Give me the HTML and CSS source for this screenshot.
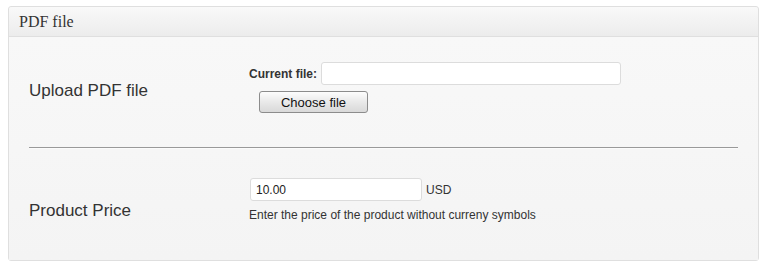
FILE: index.html
```html
<!DOCTYPE html>
<html>
<head>
  <title>PDF file</title>
  <link rel="stylesheet" href="styles.css">
</head>
<body>

  <div class="panel">
    <h3 class="panel-head">PDF file</h3>
    <div class="panel-body">

      <div class="row row-upload">
        <label class="row-label">Upload PDF file</label>
        <div class="row-field">
          <div class="current">
            <span class="current-label">Current file:</span>
            <input type="text" class="text-input file-input" value="">
          </div>
          <button class="choose-btn">Choose file</button>
        </div>
      </div>

      <hr class="divider">

      <div class="row row-price">
        <label class="row-label">Product Price</label>
        <div class="row-field">
          <div class="price">
            <input type="text" class="text-input price-input" value="10.00">
            <span class="unit">USD</span>
          </div>
          <p class="hint">Enter the price of the product without curreny symbols</p>
        </div>
      </div>

    </div>
  </div>

</body>
</html>
```

FILE: styles.css
```css
body { margin: 0; background: #fff; font-family: "Liberation Sans", Arial, sans-serif; color: #333; }

.panel {
  margin: 6px 0 0 8px;
  width: 749px;
  border: 1px solid #dfdfdf;
  border-radius: 3px;
  background: #f5f5f5;
}
.panel-head {
  margin: 0;
  height: 29px;
  line-height: 30px;
  padding-left: 10px;
  font-family: "Liberation Serif", Georgia, serif;
  font-weight: normal;
  font-size: 16px;
  color: #333;
  background: linear-gradient(#f9f9f9, #ececec);
  border-bottom: 1px solid #dfdfdf;
  border-radius: 3px 3px 0 0;
}
.panel-body {
  padding: 0 20px 37px 20px;
  background: linear-gradient(#f8f8f8, #f4f4f4);
}

.row {
  display: grid;
  grid-template-columns: 220px 1fr;
  align-items: start;
}
.row-label {
  font-size: 17px;
  line-height: 20px;
  color: #333;
}
.row-upload { padding: 25px 0 34px; }
.row-upload .row-label { margin-top: 19px; }
.row-price { padding-top: 29px; }
.row-price .row-label { margin-top: 23px; }

.current {
  display: flex;
  align-items: center;
  gap: 4px;
}
.current-label {
  font-size: 12px;
  font-weight: bold;
  color: #333;
}
.text-input {
  box-sizing: border-box;
  height: 23px;
  padding: 2px 5px;
  border: 1px solid #dcdcdc;
  border-radius: 3px;
  background: #fff;
  font-family: "Liberation Sans", Arial, sans-serif;
  font-size: 12px;
  color: #222;
  outline: none;
}
.file-input { width: 300px; }
.price-input { width: 172px; }

.choose-btn {
  display: block;
  box-sizing: border-box;
  margin: 6px 0 0 10px;
  width: 109px;
  height: 22px;
  padding: 0;
  border: 1px solid #8c8c8c;
  border-radius: 3px;
  background: linear-gradient(#fdfdfd, #e9e9e9 50%, #d9d9d9);
  font-family: "Liberation Sans", Arial, sans-serif;
  font-size: 13px;
  color: #111;
}

.divider {
  margin: 0;
  height: 0;
  border: 0;
  border-top: 1px solid #999;
  border-bottom: 1px solid #fbfbfb;
}

.price {
  display: flex;
  align-items: center;
  gap: 4px;
  margin-left: 1px;
}
.unit { font-size: 12px; color: #333; }
.hint {
  margin: 6px 0 0;
  font-size: 12px;
  line-height: 16px;
  color: #333;
}
```
